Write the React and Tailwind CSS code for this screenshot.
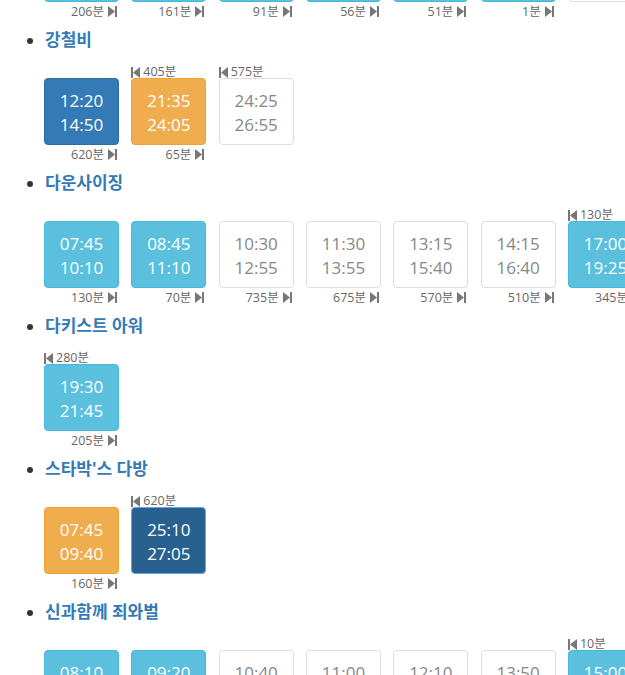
import React from "react";

const StepBack = () => (
  <svg width="9" height="11" viewBox="0 0 9 11" className="inline-block mr-[3px]">
    <rect x="0" y="0" width="2" height="11" fill="#777" />
    <polygon points="9,0 9,11 2,5.5" fill="#777" />
  </svg>
);

const StepFwd = () => (
  <svg width="9" height="11" viewBox="0 0 9 11" className="inline-block ml-[4px]">
    <polygon points="0,0 0,11 7,5.5" fill="#777" />
    <rect x="7" y="0" width="2" height="11" fill="#777" />
  </svg>
);

const boxStyles = {
  info: "bg-[#5bc0de] border-[#46b8da] text-white",
  primary: "bg-[#337ab7] border-[#2e6da4] text-white",
  warning: "bg-[#f0ad4e] border-[#eea236] text-white",
  dark: "bg-[#286090] border-[#66a3e8] text-white",
  plain: "bg-white border-[#dddddd] text-[#888888]",
};

const Slot = ({ start, end, kind, before, after }) => (
  <div className="w-[87.33px] shrink-0">
    <div className="h-[12px] text-[12.5px] text-[#666] flex items-end">
      {before && (
        <span className="flex items-center leading-[14px] translate-y-[1px]">
          <StepBack />
          {before}분
        </span>
      )}
    </div>
    <div
      className={`w-[75px] h-[67px] rounded-[4px] border flex flex-col items-center justify-center pt-[2px] text-[17px] leading-[24px] ${boxStyles[kind]}`}
    >
      <span>{start}</span>
      <span>{end}</span>
    </div>
    <div className="w-[75px] h-[16px] pt-[3px] leading-[14px] text-[12.5px] text-[#666] flex items-center justify-end pr-[2px]">
      {after && (
        <>
          {after}분
          <StepFwd />
        </>
      )}
    </div>
  </div>
);

const Movie = ({ title, slots }) => (
  <li className="h-[143px]">
    <div className="h-[24px] leading-[24px] text-[17px] font-bold text-[#337ab7]">
      {title}
    </div>
    <div className="h-[14px]" />
    <div className="flex flex-nowrap -ml-px">
      {slots.map((s, i) => (
        <Slot key={i} {...s} />
      ))}
    </div>
  </li>
);

const movies = [
  {
    title: "1987",
    slots: [
      { start: "06:50", end: "09:00", kind: "info", after: 206 },
      { start: "09:20", end: "11:30", kind: "info", after: 161 },
      { start: "12:00", end: "14:10", kind: "info", after: 91 },
      { start: "14:40", end: "16:50", kind: "info", after: 56 },
      { start: "17:45", end: "19:55", kind: "info", after: 51 },
      { start: "20:45", end: "22:55", kind: "info", after: 1 },
      { start: "22:55", end: "25:05", kind: "plain" },
    ],
  },
  {
    title: "강철비",
    slots: [
      { start: "12:20", end: "14:50", kind: "primary", after: 620 },
      { start: "21:35", end: "24:05", kind: "warning", before: 405, after: 65 },
      { start: "24:25", end: "26:55", kind: "plain", before: 575 },
    ],
  },
  {
    title: "다운사이징",
    slots: [
      { start: "07:45", end: "10:10", kind: "info", after: 130 },
      { start: "08:45", end: "11:10", kind: "info", after: 70 },
      { start: "10:30", end: "12:55", kind: "plain", after: 735 },
      { start: "11:30", end: "13:55", kind: "plain", after: 675 },
      { start: "13:15", end: "15:40", kind: "plain", after: 570 },
      { start: "14:15", end: "16:40", kind: "plain", after: 510 },
      { start: "17:00", end: "19:25", kind: "info", before: 130, after: 345 },
    ],
  },
  {
    title: "다키스트 아워",
    slots: [{ start: "19:30", end: "21:45", kind: "info", before: 280, after: 205 }],
  },
  {
    title: "스타박'스 다방",
    slots: [
      { start: "07:45", end: "09:40", kind: "warning", after: 160 },
      { start: "25:10", end: "27:05", kind: "dark", before: 620 },
    ],
  },
  {
    title: "신과함께 죄와벌",
    slots: [
      { start: "08:10", end: "10:40", kind: "info" },
      { start: "09:20", end: "11:50", kind: "info" },
      { start: "10:40", end: "13:10", kind: "plain" },
      { start: "11:00", end: "13:30", kind: "plain" },
      { start: "12:10", end: "14:40", kind: "plain" },
      { start: "13:50", end: "16:20", kind: "plain" },
      { start: "15:00", end: "17:30", kind: "info", before: 10 },
    ],
  },
];

export default function App() {
  return (
    <div
      className="w-[625px] h-[675px] overflow-hidden bg-white text-[#333]"
      style={{ fontFamily: '"Open Sans", "Noto Sans CJK KR", sans-serif' }}
    >
      <ul className="list-disc pl-[45px] mt-[-115px] marker:text-[#333]">
        {movies.map((m, i) => (
          <Movie key={i} {...m} />
        ))}
      </ul>
    </div>
  );
}
